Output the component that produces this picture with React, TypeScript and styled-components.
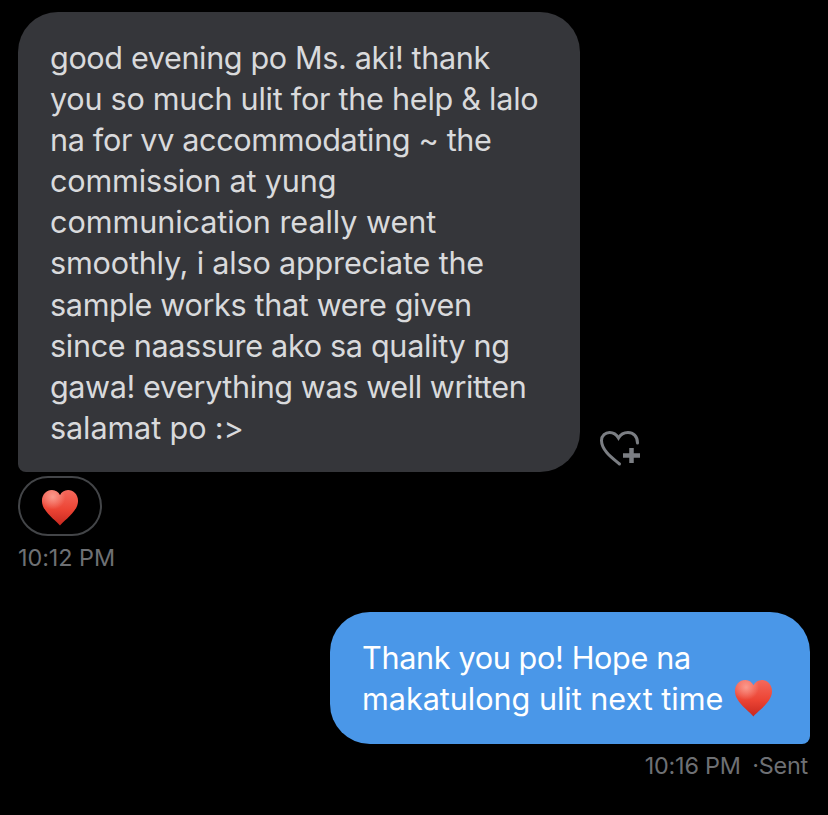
import React from "react";
import styled, { createGlobalStyle } from "styled-components";

const Global = createGlobalStyle`
  html, body { margin: 0; padding: 0; background: #000; }
  body { font-family: Inter, "Liberation Sans", sans-serif; overflow: hidden; }
`;

const Thread = styled.main`
  width: 828px;
  height: 815px;
  background: #000;
  box-sizing: border-box;
  padding: 12px 18px 0;
  display: flex;
  flex-direction: column;
`;

const Row = styled.div`
  display: flex;
  align-items: flex-end;
  gap: 19px;
`;

const Received = styled.div`
  width: 562px;
  height: 460px;
  box-sizing: border-box;
  padding: 25px 20px 0 32px;
  background: #35363a;
  border-radius: 40px 40px 40px 8px;
  color: #d9dadc;
  font-size: 30.6px;
  line-height: 41.1px;
`;

const Line = styled.div<{ $tracking: number }>`
  letter-spacing: ${(p) => p.$tracking}px;
  white-space: pre;
`;

const LikeButton = styled.button`
  all: unset;
  display: flex;
  width: 42px;
  height: 38px;
  margin-bottom: 5px;
`;

const Reaction = styled.div`
  margin-top: 4px;
  width: 84px;
  height: 60px;
  box-sizing: border-box;
  padding-top: 3px;
  border: 2px solid #434548;
  border-radius: 30px;
  display: flex;
  align-items: center;
  justify-content: center;
`;

const Stamp = styled.div<{ $right?: boolean }>`
  margin-top: 7px;
  margin-right: ${(p) => (p.$right ? "2px" : "0")};
  align-self: ${(p) => (p.$right ? "flex-end" : "flex-start")};
  color: #6e7074;
  font-size: 23.4px;
  line-height: 30px;
  letter-spacing: -0.05px;
  white-space: pre;
`;

const Time = styled.span`
  letter-spacing: -0.2px;
`;

const Status = styled.span`
  margin-left: 5px;
  letter-spacing: -0.2px;
`;

const Sent = styled.div`
  align-self: flex-end;
  margin-top: 39px;
  width: 480px;
  height: 132px;
  box-sizing: border-box;
  padding: 25px 20px 0 32px;
  background: #4a97e8;
  border-radius: 40px 40px 8px 40px;
  color: #fff;
  font-size: 30.6px;
  line-height: 41px;
`;

const SentLine = styled(Line)`
  display: flex;
  align-items: center;
  gap: 11px;
`;

const HEART_PATH =
  "M20 38.500C17 34 1 24 1 12.500C1 5.500 6 1 11.500 1C15.500 1 18.500 3.200 20 6.500C21.500 3.200 24.500 1 28.500 1C34 1 39 5.500 39 12.500C39 24 23 34 20 38.500Z";

const Heart = ({ size, id }: { size: number; id: string }) => (
  <svg width={size} height={size} viewBox="0 0 40 40" aria-hidden="true">
    <defs>
      <linearGradient id={id} x1="0" y1="0" x2="0" y2="1">
        <stop offset="0" stopColor="#f4695c" />
        <stop offset="0.55" stopColor="#ec4434" />
        <stop offset="1" stopColor="#c7281f" />
      </linearGradient>
      <radialGradient id={`${id}-g`} cx="0.3" cy="0.2" r="0.35">
        <stop offset="0" stopColor="#ffb5a8" stopOpacity="0.7" />
        <stop offset="1" stopColor="#ffb5a8" stopOpacity="0" />
      </radialGradient>
    </defs>
    <path d={HEART_PATH} fill={`url(#${id})`} />
    <path d={HEART_PATH} fill={`url(#${id}-g)`} />
  </svg>
);

const HeartPlus = () => (
  <svg width="42" height="38" viewBox="0 0 42 38" fill="none" stroke="#7b7e83" aria-hidden="true">
    <path
      d="M20.500 35C14 29.500 2.500 21.500 2.500 11.500C2.500 6.500 6.500 3.500 10.500 3.500C14.500 3.500 17.500 5.500 19.500 9C21.500 5.500 25 3.500 29 3.500C34 3.500 38.500 7 38.500 14"
      strokeWidth="3"
      strokeLinecap="round"
    />
    <path d="M32.500 19V34M24 26.500H41" strokeWidth="4.500" />
  </svg>
);

const MESSAGE: { text: string; tracking: number }[] = [
  { text: "good evening po Ms. aki! thank", tracking: -0.38 },
  { text: "you so much ulit for the help & lalo", tracking: -0.27 },
  { text: "na for vv accommodating ~ the", tracking: -0.35 },
  { text: "commission at yung", tracking: -0.18 },
  { text: "communication really went", tracking: -0.07 },
  { text: "smoothly, i also appreciate the", tracking: -0.19 },
  { text: "sample works that were given", tracking: -0.35 },
  { text: "since naassure ako sa quality ng", tracking: -0.32 },
  { text: "gawa! everything was well written", tracking: -0.41 },
  { text: "salamat po :>", tracking: -0.12 },
];

export default function App() {
  return (
    <>
      <Global />
      <Thread>
        <Row>
          <Received>
            {MESSAGE.map((line) => (
              <Line key={line.text} $tracking={line.tracking}>
                {line.text}
              </Line>
            ))}
          </Received>
          <LikeButton aria-label="Add reaction">
            <HeartPlus />
          </LikeButton>
        </Row>
        <Reaction>
          <Heart size={38} id="reaction-heart" />
        </Reaction>
        <Stamp>10:12 PM</Stamp>
        <Sent>
          <SentLine $tracking={-0.35}>Thank you po! Hope na</SentLine>
          <SentLine $tracking={-0.03}>
            makatulong ulit next time
            <Heart size={39} id="sent-heart" />
          </SentLine>
        </Sent>
        <Stamp $right>
          <Time>10:16 PM</Time>
          <Status> ·Sent</Status>
        </Stamp>
      </Thread>
    </>
  );
}
